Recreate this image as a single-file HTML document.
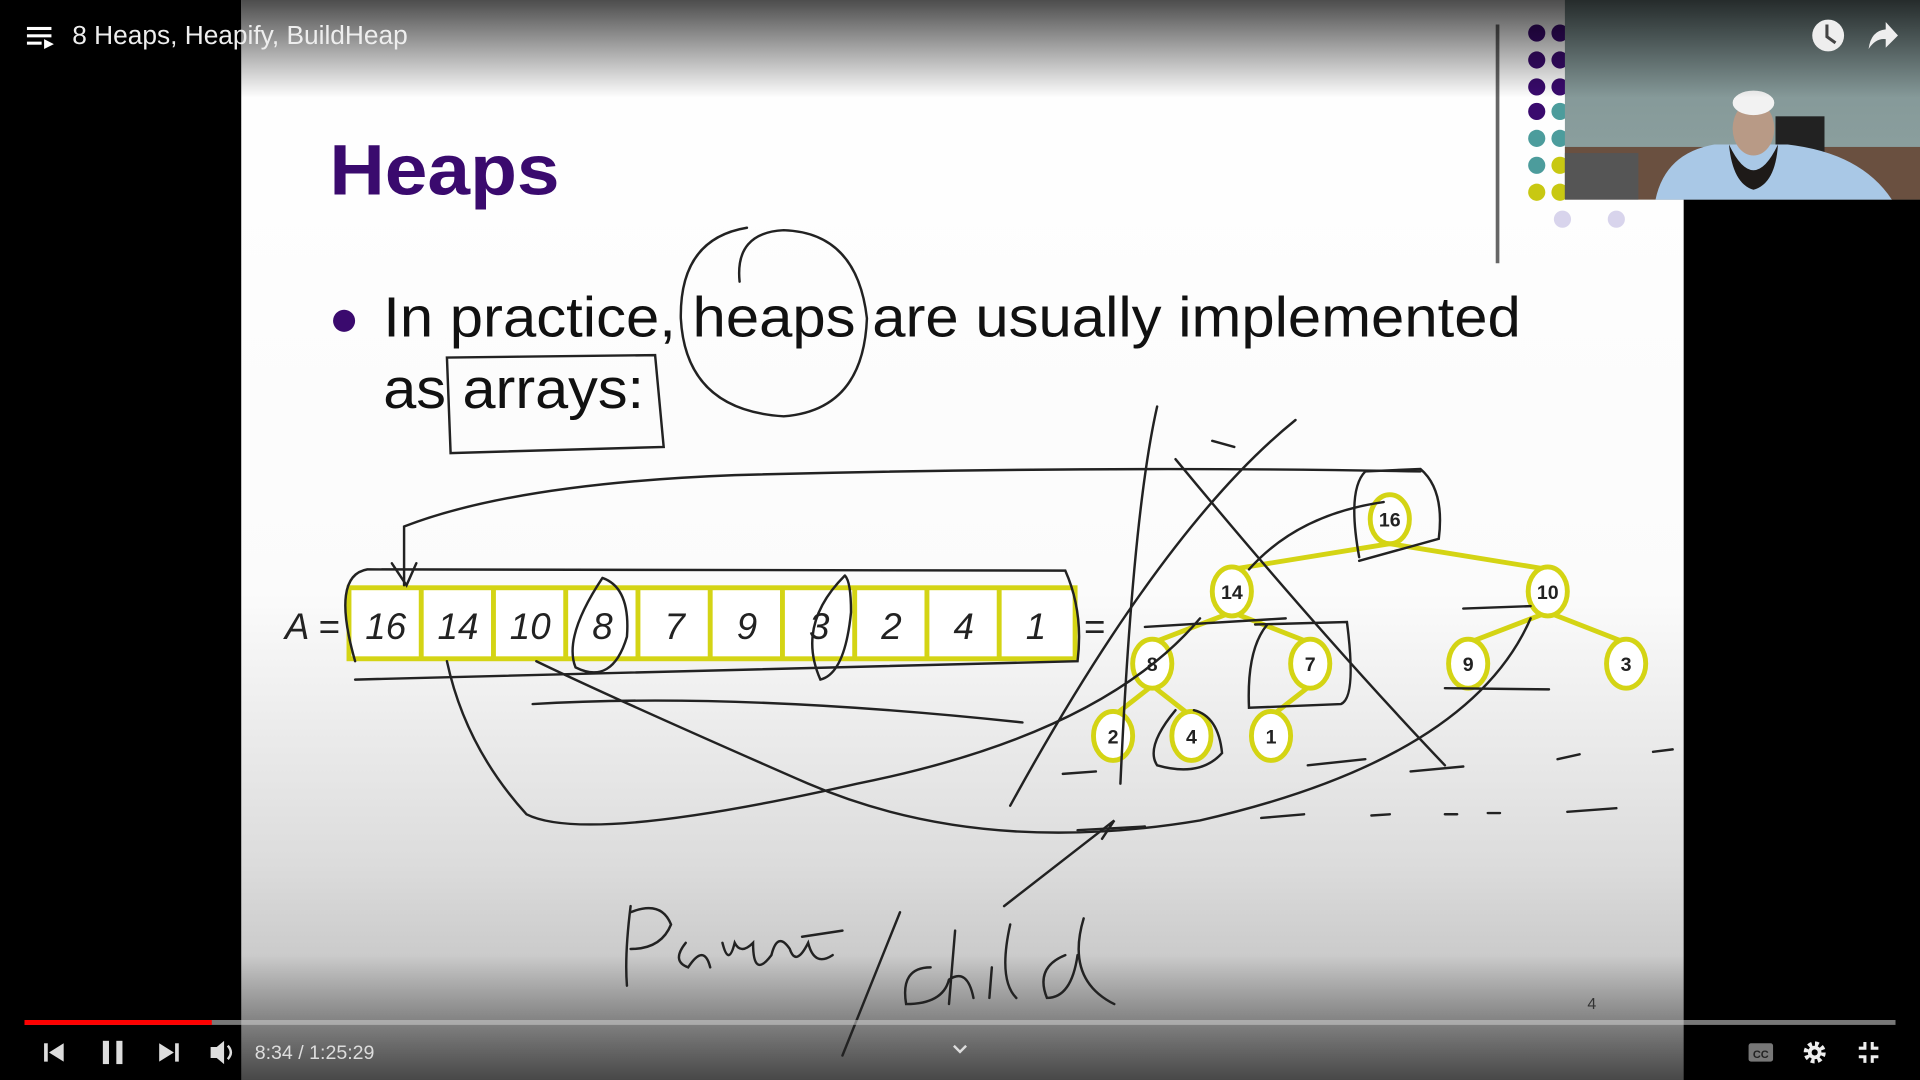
<!DOCTYPE html>
<html><head><meta charset="utf-8"><style>
html,body{margin:0;padding:0;background:#000;width:1920px;height:1080px;overflow:hidden}
svg{display:block}
</style></head><body>
<svg width="1920" height="1080" viewBox="0 0 1568 882" xmlns="http://www.w3.org/2000/svg" font-family="Liberation Sans, sans-serif">
<defs>
<linearGradient id="slide" x1="0" y1="0" x2="0" y2="1">
<stop offset="0" stop-color="#ffffff"/><stop offset="0.55" stop-color="#fbfbfb"/><stop offset="0.8" stop-color="#dcdcdc"/><stop offset="1" stop-color="#b4b4b4"/></linearGradient>
<linearGradient id="top" x1="0" y1="0" x2="0" y2="1">
<stop offset="0" stop-color="#000" stop-opacity="0.7"/><stop offset="1" stop-color="#000" stop-opacity="0"/></linearGradient>
<linearGradient id="bot" x1="0" y1="0" x2="0" y2="1">
<stop offset="0" stop-color="#000" stop-opacity="0"/><stop offset="1" stop-color="#000" stop-opacity="0.6"/></linearGradient>
<linearGradient id="cam" x1="0" y1="0" x2="0" y2="1">
<stop offset="0" stop-color="#7d9191"/><stop offset="1" stop-color="#8fa3a2"/></linearGradient>
</defs>
<rect width="1568" height="882" fill="#000"/>
<rect x="197" y="0" width="1178" height="882" fill="url(#slide)"/>
<g>
<circle cx="1255" cy="27" r="7" fill="#3a0a6e"/><circle cx="1274" cy="27" r="7" fill="#3a0a6e"/>
<circle cx="1255" cy="49" r="7" fill="#3a0a6e"/><circle cx="1274" cy="49" r="7" fill="#3a0a6e"/>
<circle cx="1255" cy="71" r="7" fill="#3a0a6e"/><circle cx="1274" cy="71" r="7" fill="#3a0a6e"/>
<circle cx="1255" cy="91" r="7" fill="#3a0a6e"/><circle cx="1274" cy="91" r="7" fill="#4c9c9c"/>
<circle cx="1255" cy="113" r="7" fill="#4c9c9c"/><circle cx="1274" cy="113" r="7" fill="#4c9c9c"/>
<circle cx="1255" cy="135" r="7" fill="#4c9c9c"/><circle cx="1274" cy="135" r="7" fill="#c8c812"/>
<circle cx="1255" cy="157" r="7" fill="#c8c812"/><circle cx="1274" cy="157" r="7" fill="#c8c812"/>
<circle cx="1276" cy="179" r="7" fill="#d8d4ec"/><circle cx="1320" cy="179" r="7" fill="#d8d4ec"/>
</g>
<line x1="1223" y1="20" x2="1223" y2="215" stroke="#666" stroke-width="3"/>
<rect x="1278" y="0" width="290" height="163" fill="url(#cam)"/>
<rect x="1278" y="120" width="290" height="43" fill="#6a5040"/>
<rect x="1278" y="125" width="60" height="38" fill="#555"/>
<rect x="1450" y="95" width="40" height="60" fill="#222"/>
<path d="M1352 163 Q1360 125 1400 118 L1460 118 Q1520 125 1545 163 Z" fill="#a9c8e6"/>
<ellipse cx="1432" cy="105" rx="17" ry="22" fill="#b89a86"/>
<path d="M1412 118 Q1432 160 1452 118 Q1450 150 1432 155 Q1415 150 1412 118Z" fill="#1e1a18"/>
<ellipse cx="1432" cy="84" rx="17" ry="10" fill="#f2f2f2"/>
<rect x="197" y="0" width="1371" height="80" fill="url(#top)"/>
<rect x="0" y="780" width="1568" height="102" fill="url(#bot)"/>
<text x="269" y="159" font-size="58" font-weight="bold" fill="#3a0a6e" textLength="188" lengthAdjust="spacingAndGlyphs">Heaps</text>
<circle cx="281" cy="262" r="9" fill="#3a0a6e"/>
<text x="313" y="275" font-size="46" fill="#111" textLength="929" lengthAdjust="spacingAndGlyphs">In practice, heaps are usually implemented</text>
<text x="313" y="333" font-size="46" fill="#111" textLength="213" lengthAdjust="spacingAndGlyphs">as arrays:</text>
<g stroke="#d4d414" stroke-width="4" fill="#fff">
<rect x="285" y="480" width="593" height="58"/>
<line x1="344" y1="480" x2="344" y2="538"/><line x1="403" y1="480" x2="403" y2="538"/><line x1="462" y1="480" x2="462" y2="538"/><line x1="521" y1="480" x2="521" y2="538"/><line x1="580" y1="480" x2="580" y2="538"/><line x1="639" y1="480" x2="639" y2="538"/><line x1="698" y1="480" x2="698" y2="538"/><line x1="757" y1="480" x2="757" y2="538"/><line x1="816" y1="480" x2="816" y2="538"/>
</g>
<g font-size="30" font-style="italic" fill="#222" text-anchor="middle">
<text x="255" y="522">A =</text>
<text x="315" y="522">16</text><text x="374" y="522">14</text><text x="433" y="522">10</text><text x="492" y="522">8</text><text x="551" y="522">7</text><text x="610" y="522">9</text><text x="669" y="522">3</text><text x="728" y="522">2</text><text x="787" y="522">4</text><text x="846" y="522">1</text>
<text x="894" y="522" font-style="normal">=</text>
</g>
<g stroke="#d4d414" stroke-width="4" fill="none">
<line x1="1135" y1="444" x2="1006" y2="465"/><line x1="1135" y1="444" x2="1264" y2="465"/>
<line x1="1006" y1="500" x2="941" y2="525"/><line x1="1006" y1="500" x2="1070" y2="525"/>
<line x1="1264" y1="500" x2="1199" y2="525"/><line x1="1264" y1="500" x2="1328" y2="525"/>
<line x1="941" y1="560" x2="909" y2="585"/><line x1="941" y1="560" x2="973" y2="585"/>
<line x1="1070" y1="560" x2="1038" y2="585"/>
</g>
<g stroke="#d4d414" stroke-width="4" fill="#fff">
<ellipse cx="1135" cy="424" rx="16" ry="20"/><ellipse cx="1006" cy="483" rx="16" ry="20"/><ellipse cx="1264" cy="483" rx="16" ry="20"/>
<ellipse cx="941" cy="542" rx="16" ry="20"/><ellipse cx="1070" cy="542" rx="16" ry="20"/><ellipse cx="1199" cy="542" rx="16" ry="20"/><ellipse cx="1328" cy="542" rx="16" ry="20"/>
<ellipse cx="909" cy="601" rx="16" ry="20"/><ellipse cx="973" cy="601" rx="16" ry="20"/><ellipse cx="1038" cy="601" rx="16" ry="20"/>
</g>
<g font-size="16" font-weight="bold" fill="#222" text-anchor="middle">
<text x="1135" y="430">16</text><text x="1006" y="489">14</text><text x="1264" y="489">10</text>
<text x="941" y="548">8</text><text x="1070" y="548">7</text><text x="1199" y="548">9</text><text x="1328" y="548">3</text>
<text x="909" y="607">2</text><text x="973" y="607">4</text><text x="1038" y="607">1</text>
</g>
<g stroke="#222" stroke-width="2" fill="none" stroke-linecap="round">
<path d="M604 230 Q600 190 640 188 Q700 190 708 260 Q705 335 640 340 Q560 335 556 260 Q555 195 610 186"/>
<path d="M365 292 L535 290 L542 365 L368 370 Z"/>
<path d="M330 478 L330 430 Q420 395 600 388 Q900 380 1160 385"/>
<path d="M320 460 L332 478 L340 460"/>
<path d="M290 540 Q270 470 300 465 L870 466 Q885 500 880 540 L290 555"/>
<path d="M492 472 Q460 520 470 545 Q500 560 512 520 Q515 480 492 472"/>
<path d="M690 470 Q650 510 670 555 Q690 550 695 500 Q695 475 690 470"/>
<path d="M365 540 Q380 610 430 665 Q480 690 700 640 Q900 600 980 505"/>
<path d="M438 540 Q500 570 660 640 Q800 700 980 670 Q1200 620 1250 505"/>
<path d="M435 575 Q600 565 835 590"/>
<path d="M945 332 Q925 420 915 640"/>
<path d="M960 375 Q1080 520 1180 625"/>
<path d="M825 658 Q950 430 1058 343"/>
<path d="M990 360 L1008 365"/>
<path d="M1110 455 Q1100 400 1115 385 L1160 383 Q1180 400 1175 440 L1110 458"/>
<path d="M1020 465 Q1060 420 1130 410"/>
<path d="M1025 510 L1100 508 Q1108 570 1095 575 L1020 578 Q1018 530 1035 510"/>
<path d="M960 580 Q935 610 945 625 Q980 635 998 615 Q995 585 975 580"/>
<path d="M935 512 L1050 505"/>
<path d="M1195 497 L1250 495"/><path d="M1180 562 L1265 563"/>
<path d="M868 632 L895 630"/><path d="M1068 625 L1115 620"/><path d="M1152 630 L1195 626"/>
<path d="M1030 668 L1065 665"/><path d="M1120 666 L1135 665"/><path d="M1180 665 L1190 665"/><path d="M1215 664 L1225 664"/><path d="M1280 663 L1320 660"/><path d="M1272 620 L1290 616"/><path d="M1350 614 L1366 612"/>
<path d="M880 678 L935 675"/>
<path d="M820 740 L910 670 L900 685"/>
<path d="M515 740 Q510 780 512 805 M515 745 Q540 735 548 755 Q540 775 515 775 M560 770 Q548 785 562 790 Q575 770 580 790 M590 770 Q595 790 600 770 Q605 780 615 770 Q615 800 630 780 Q635 760 645 775 Q650 790 660 770 Q665 790 680 780 M655 765 L688 760"/>
<path d="M735 745 L688 862"/>
<path d="M760 790 Q735 790 740 820 Q770 820 775 800 M780 760 L775 820 M775 800 Q790 790 795 815 M810 790 L808 815 M825 755 Q815 800 830 815 M870 780 Q845 790 855 815 Q875 815 880 780 M885 750 Q870 800 910 820"/>
</g>
<text x="1300" y="824" font-size="13" fill="#333" text-anchor="middle">4</text>
<g fill="#fff">
<rect x="22" y="22" width="20" height="2.5"/><rect x="22" y="28" width="20" height="2.5"/><rect x="22" y="34" width="12" height="2.5"/>
<path d="M36 32 L44 36 L36 40Z"/>
</g>
<text x="59" y="36" font-size="21" fill="#eee" textLength="274" lengthAdjust="spacingAndGlyphs">8 Heaps, Heapify, BuildHeap</text>
<circle cx="1493" cy="29" r="13" fill="#eee"/>
<path d="M1492 20 L1492 30 L1499 35" stroke="#444" stroke-width="2.5" fill="none"/>
<path d="M1526 40 Q1528 25 1540 24 L1540 18 L1550 29 L1540 39 L1540 32 Q1532 31 1526 40Z" fill="#eee"/>
<rect x="20" y="833" width="1528" height="4" fill="rgba(200,200,200,0.6)"/>
<rect x="20" y="833" width="153" height="4" fill="#f00"/>
<g fill="#ddd">
<rect x="36" y="852" width="3" height="15"/><path d="M52 852 L40 859.5 L52 867Z"/>
<rect x="84" y="850" width="5" height="19"/><rect x="95" y="850" width="5" height="19"/>
<path d="M130 852 L142 859.5 L130 867Z"/><rect x="143" y="852" width="3" height="15"/>
<path d="M172 855 L177 855 L183 850 L183 869 L177 864 L172 864Z"/>
<path d="M186 854 Q191 859.5 186 865" stroke="#ddd" stroke-width="2" fill="none"/>
</g>
<text x="208" y="865" font-size="16" fill="#ddd">8:34 / 1:25:29</text>
<path d="M779 854 L784 859 L789 854" stroke="#ddd" stroke-width="2" fill="none"/>
<rect x="1428" y="852" width="20" height="15" rx="2" fill="#777"/>
<text x="1438" y="864" font-size="9" font-weight="bold" fill="#222" text-anchor="middle">CC</text>
<circle cx="1482" cy="859.5" r="7" fill="none" stroke="#eee" stroke-width="4" stroke-dasharray="3 2.5"/>
<circle cx="1482" cy="859.5" r="5.5" fill="#eee"/><circle cx="1482" cy="859.5" r="2.5" fill="#000"/>
<g stroke="#eee" stroke-width="2.5" fill="none">
<path d="M1518 856 L1523 856 L1523 851"/><path d="M1529 851 L1529 856 L1534 856"/>
<path d="M1518 863 L1523 863 L1523 868"/><path d="M1529 868 L1529 863 L1534 863"/>
</g>
</svg>
</body></html>
